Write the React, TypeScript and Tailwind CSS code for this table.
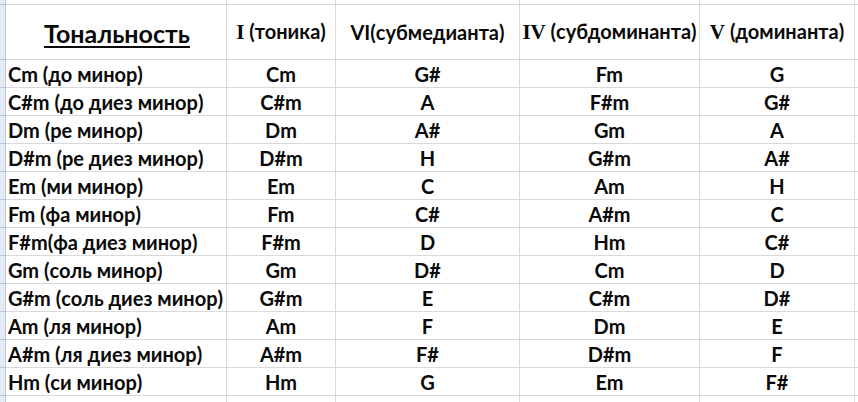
import React from 'react';

interface ChordRow {
  key: string;
  tonic: string;
  submediant: string;
  subdominant: string;
  dominant: string;
}

const rows: ChordRow[] = [
  { key: 'Cm (до минор)', tonic: 'Cm', submediant: 'G#', subdominant: 'Fm', dominant: 'G' },
  { key: 'C#m (до диез минор)', tonic: 'C#m', submediant: 'A', subdominant: 'F#m', dominant: 'G#' },
  { key: 'Dm (ре минор)', tonic: 'Dm', submediant: 'A#', subdominant: 'Gm', dominant: 'A' },
  { key: 'D#m (ре диез минор)', tonic: 'D#m', submediant: 'H', subdominant: 'G#m', dominant: 'A#' },
  { key: 'Em (ми минор)', tonic: 'Em', submediant: 'C', subdominant: 'Am', dominant: 'H' },
  { key: 'Fm (фа минор)', tonic: 'Fm', submediant: 'C#', subdominant: 'A#m', dominant: 'C' },
  { key: 'F#m(фа диез минор)', tonic: 'F#m', submediant: 'D', subdominant: 'Hm', dominant: 'C#' },
  { key: 'Gm (соль минор)', tonic: 'Gm', submediant: 'D#', subdominant: 'Cm', dominant: 'D' },
  { key: 'G#m (соль диез минор)', tonic: 'G#m', submediant: 'E', subdominant: 'C#m', dominant: 'D#' },
  { key: 'Am (ля минор)', tonic: 'Am', submediant: 'F', subdominant: 'Dm', dominant: 'E' },
  { key: 'A#m (ля диез минор)', tonic: 'A#m', submediant: 'F#', subdominant: 'D#m', dominant: 'F' },
  { key: 'Hm (си минор)', tonic: 'Hm', submediant: 'G', subdominant: 'Em', dominant: 'F#' },
];

const cell = 'border-r border-b border-[#d9d9d9] flex items-center shrink-0';
const roman = 'font-["Liberation_Serif",serif] font-bold text-[21px]';

// Строка таблицы: полоса заголовков строк + 5 колонок + хвост
function Row({ h, cells }: { h: string; cells: React.ReactNode[] }) {
  return (
    <div className={`flex ${h}`}>
      <div className="w-[6px] shrink-0 bg-[#e4ebf5] border-r border-b border-[#b8c6d8]" />
      <div className={`${cell} w-[221px] pl-[2px]`}>{cells[0]}</div>
      <div className={`${cell} w-[109px] justify-center`}>{cells[1]}</div>
      <div className={`${cell} w-[184px] justify-center`}>{cells[2]}</div>
      <div className={`${cell} w-[180px] justify-center`}>{cells[3]}</div>
      <div className={`${cell} w-[155px] justify-center`}>{cells[4]}</div>
      <div className="flex-1 border-b border-[#d9d9d9]" />
    </div>
  );
}

export default function App() {
  return (
    <div className="w-[858px] h-[402px] overflow-hidden bg-white text-[#0a0a0a] font-['Lato',sans-serif] font-bold text-[20px] leading-none">
      <Row h="h-[5px]" cells={['', '', '', '', '']} />

      {/* Заголовок */}
      <Row
        h="h-[55px]"
        cells={[
          <span className="w-full text-center text-[25px] underline underline-offset-[3px] decoration-2 pt-[2px]">Тональность</span>,
          <span className="whitespace-nowrap"><span className={roman}>I</span> (тоника)</span>,
          <span className="whitespace-nowrap">VI(субмедианта)</span>,
          <span className="whitespace-nowrap"><span className={roman}>IV</span> (субдоминанта)</span>,
          <span className="whitespace-nowrap"><span className={roman}>V</span> (доминанта)</span>,
        ]}
      />

      {rows.map((r) => (
        <Row
          key={r.key}
          h="h-[28px]"
          cells={[r.key, r.tonic, r.submediant, r.subdominant, r.dominant]}
        />
      ))}

      <Row h="h-[7px]" cells={['', '', '', '', '']} />
    </div>
  );
}
